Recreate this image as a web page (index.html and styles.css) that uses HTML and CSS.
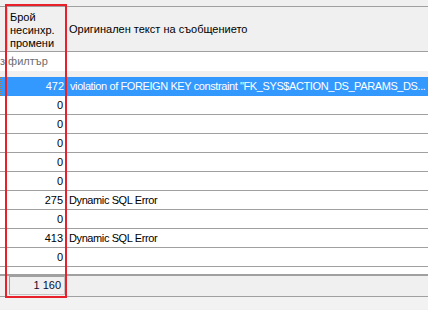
FILE: index.html
```html
<!DOCTYPE html>
<html lang="bg">

<head>
  <meta charset="UTF-8" />
  <title>Несинхронизирани промени</title>
  <link rel="stylesheet" href="styles.css">
</head>

<body>

  <div class="grid">
    <div class="top-strip"></div>

    <!-- Column headers -->
    <div class="head row-cols">
      <div class="cell lead"></div>
      <div class="cell col-count">Брой<br>несинхр.<br>промени</div>
      <div class="cell col-text">Оригинален текст на съобщението</div>
    </div>

    <!-- Filter row -->
    <div class="filter">з филтър</div>
    <div class="splitter"></div>

    <!-- Data rows -->
    <div class="rows">
      <div class="row row-cols selected">
        <div class="cell lead"></div>
        <div class="cell num">472</div>
        <div class="cell msg">violation of FOREIGN KEY constraint "FK_SYS$ACTION_DS_PARAMS_DS...</div>
      </div>
      <div class="row row-cols">
        <div class="cell lead"></div>
        <div class="cell num">0</div>
        <div class="cell msg"></div>
      </div>
      <div class="row row-cols">
        <div class="cell lead"></div>
        <div class="cell num">0</div>
        <div class="cell msg"></div>
      </div>
      <div class="row row-cols">
        <div class="cell lead"></div>
        <div class="cell num">0</div>
        <div class="cell msg"></div>
      </div>
      <div class="row row-cols">
        <div class="cell lead"></div>
        <div class="cell num">0</div>
        <div class="cell msg"></div>
      </div>
      <div class="row row-cols">
        <div class="cell lead"></div>
        <div class="cell num">0</div>
        <div class="cell msg"></div>
      </div>
      <div class="row row-cols">
        <div class="cell lead"></div>
        <div class="cell num">275</div>
        <div class="cell msg">Dynamic SQL Error</div>
      </div>
      <div class="row row-cols">
        <div class="cell lead"></div>
        <div class="cell num">0</div>
        <div class="cell msg"></div>
      </div>
      <div class="row row-cols">
        <div class="cell lead"></div>
        <div class="cell num">413</div>
        <div class="cell msg">Dynamic SQL Error</div>
      </div>
      <div class="row row-cols">
        <div class="cell lead"></div>
        <div class="cell num">0</div>
        <div class="cell msg"></div>
      </div>
    </div>

    <!-- Totals -->
    <div class="footer">
      <div class="total">1 160</div>
    </div>
    <div class="bottom-strip"></div>

    <!-- Highlight around the count column -->
    <div class="mark"></div>
  </div>

</body>

</html>
```

FILE: styles.css
```css
* {
  box-sizing: border-box;
}

body {
  margin: 0;
  width: 428px;
  height: 310px;
  overflow: hidden;
  background: #f0f0f0;
  color: #000;
  font-family: 'Liberation Sans', Arial, sans-serif;
  font-size: 11px;
}

.grid {
  position: relative;
  height: 310px;
}

.top-strip {
  height: 6px;
  background: #f0f0f0;
}

/* Shared column layout */
.row-cols {
  display: grid;
  grid-template-columns: 8px 59px 1fr;
}

.cell {
  white-space: nowrap;
  overflow: hidden;
}

/* Header */
.head {
  height: 46px;
  border-top: 1px solid #a0a0a0;
  border-bottom: 1px solid #a0a0a0;
  background: #f0f0f0;
}

.head .lead {
  border-right: 1px solid #d0d0d0;
  margin: 1px 0;
}

.col-count {
  padding: 4px 0 0 2px;
  line-height: 13px;
  border-right: 1px solid #c8c8c8;
}

.col-text {
  display: flex;
  align-items: center;
  padding-left: 2px;
}

/* Filter */
.filter {
  height: 19px;
  line-height: 19px;
  background: #fff;
  color: #6d6d6d;
  white-space: nowrap;
}

.splitter {
  height: 6px;
  background: #f0f0f0;
}

/* Data rows */
.rows {
  background: #fff;
  padding-bottom: 7px;
  border-bottom: 2px solid #a0a0a0;
}

.row {
  height: 19px;
  line-height: 18px;
  border-bottom: 1px solid #a0a0a0;
}

.num {
  text-align: right;
  padding-right: 4px;
}

.msg {
  padding-left: 2px;
  letter-spacing: -0.4px;
}

.row.selected {
  background: #3399ff;
  color: #fff;
  border: 1px dotted #b07a48;
  line-height: 17px;
}

.row.selected .lead {
  margin-left: -1px;
}

/* Totals */
.footer {
  height: 21px;
  padding-left: 9px;
  border-bottom: 1px solid #a0a0a0;
  background: #f0f0f0;
}

.total {
  width: 56px;
  height: 19px;
  line-height: 17px;
  text-align: right;
  padding-right: 3px;
  border: 1px solid #a0a0a0;
  border-right-color: #c4c4c4;
  border-bottom-color: #c4c4c4;
  color: #0a0a30;
}

.bottom-strip {
  height: 12px;
  background: #f2f2f2;
}

.mark {
  position: absolute;
  left: 5px;
  top: 4px;
  width: 62px;
  height: 294px;
  border: 2px solid #e8202a;
}
```
